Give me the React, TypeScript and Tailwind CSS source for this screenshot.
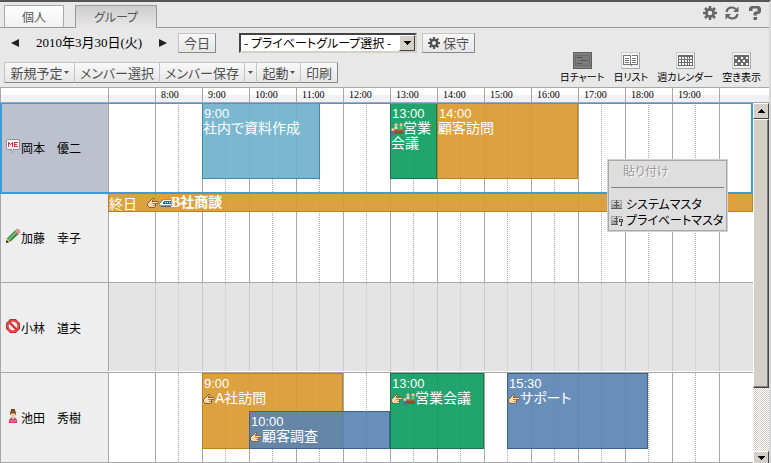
import { useState } from 'react';
import type { ReactNode } from 'react';

type Tone = 'cyan' | 'green' | 'orange' | 'blue';
type EventIcon = 'hand' | 'meeting';

interface ScheduleEvent {
  start: number;
  end: number;
  time: string;
  title: string;
  tone: Tone;
  icons?: EventIcon[];
  lower?: boolean;
}

interface Member {
  id: string;
  name: string;
  icon: ReactNode;
  selected?: boolean;
  off?: boolean;
  allDay?: boolean;
  events: ScheduleEvent[];
}

const HOUR_WIDTH = 47;
const FIRST_HOUR = 7;
const HOURS = [8, 9, 10, 11, 12, 13, 14, 15, 16, 17, 18, 19];

const toneClass: Record<Tone, string> = {
  cyan: 'bg-[#6db0ca]/90 border-[#3b8db0]',
  green: 'bg-[#099a5e]/90 border-[#14794b]',
  orange: 'bg-[#d9982a]/90 border-[#bf8020]',
  blue: 'bg-[#5883b2]/90 border-[#3c6290]',
};

/* ---------- icons ---------- */

function MeIcon() {
  return (
    <svg width="14" height="14" viewBox="0 0 14 14" shapeRendering="crispEdges">
      <path d="M1 0h12v1h1v9h-1v1H8v1H7v2H6v-2H5v-1H1v-1H0V1h1z" fill="#8a9494" />
      <path d="M1 1h12v9H7v2H6v-2H1z" fill="#f4f4f4" />
      <path d="M2 3h1v1h1v1h1V4h1V3h1v5H6V5H5v1H4V5H3v3H2zM8 3h4v1H9v1h2v1H9v1h3v1H8z" fill="#d8303c" />
    </svg>
  );
}

function PencilIcon() {
  return (
    <svg width="14" height="14" viewBox="0 0 14 14">
      <path d="M0 14l1-4.500 8-8L12.500 5l-8 7.500z" fill="#2c7a35" />
      <path d="M2 10l7.500-7.500L11 4l-7.500 7.500z" fill="#6cc46c" />
      <path d="M9 2l1.800-1.800h1.700L14 1.800v1.500L12.300 5z" fill="#e49a94" stroke="#a8705e" strokeWidth=".6" />
      <path d="M8.500 2.300l3.200 3.200" stroke="#8b98a0" strokeWidth="1" />
      <path d="M0 14l1-4.500L4.500 12.700z" fill="#e8cc94" />
      <path d="M0 14l.6-3 2.400 2.300z" fill="#3a2210" />
    </svg>
  );
}

function ForbiddenIcon() {
  return (
    <svg width="14" height="14" viewBox="0 0 14 14">
      <path d="M4.200 0h5.600L14 4.200v5.600L9.800 14H4.200L0 9.800V4.200z" fill="#b52a2a" />
      <circle cx="7" cy="7" r="5.300" fill="#f6eeee" stroke="#e05050" strokeWidth="2" />
      <path d="M3.200 3.200l7.600 7.600" stroke="#cf3d3d" strokeWidth="2.400" />
    </svg>
  );
}

function PersonIcon() {
  return (
    <svg width="14" height="14" viewBox="0 0 14 14">
      <path d="M5 0h4v2H5z" fill="#70401e" />
      <circle cx="7" cy="4" r="3" fill="#8a5028" />
      <path d="M5 4.500h4v2.200L8 8.500H6L5 6.700z" fill="#f2cda2" />
      <path d="M3 14v-3l2-2.500h4l2 2.500v3z" fill="#d83a70" />
      <path d="M5.500 8.500h3L7 10.500z" fill="#fbe6d8" />
      <path d="M4 12h6" stroke="#f08aac" />
    </svg>
  );
}

function HandIcon() {
  return (
    <svg width="12" height="12" viewBox="0 0 12 12" shapeRendering="crispEdges" className="inline-block shrink-0 align-[-2px]">
      <path d="M5 1h2v2H6v1h5v1h1v1h-1v1H9v3H8v1H2v-1H1V9H0V6h1V5h1V4h1V3h1V2h1z" fill="#8f5f34" />
      <path d="M5 2h1v1H5v2h6v1H8v4H2V9H1V6h1V5h1V4h1V3h1z" fill="#fbd9ae" />
      <path d="M5 6h3v1H5zM6 8h2v1H6z" fill="#b98350" />
    </svg>
  );
}

function TrainIcon() {
  return (
    <svg width="12" height="12" viewBox="0 0 12 12" shapeRendering="crispEdges" className="inline-block shrink-0 align-[-2px]">
      <path d="M3 2h9v8H1V9H0V6h1V4h1V3h1z" fill="#7f98b4" />
      <path d="M4 3h8v5H1V6h1V5h1V4h1z" fill="#f2f6fa" />
      <path d="M5 4h7v3H4V5h1z" fill="#2760c0" />
      <path d="M6 5h1v1H6zM8 5h1v1H8zM10 5h1v1h-1z" fill="#fff" />
      <path d="M2 9h10v1H2z" fill="#5c6268" />
    </svg>
  );
}

function MeetingIcon() {
  return (
    <svg width="12" height="12" viewBox="0 0 12 12" className="inline-block shrink-0 align-[-2px]">
      <circle cx="5" cy="1.800" r="1.600" fill="#efc79a" />
      <circle cx="10" cy="1.800" r="1.600" fill="#efc79a" />
      <path d="M3.500 3.500h3V6h-3z" fill="#e4e0dc" />
      <path d="M8.500 3.500h3V6h-3z" fill="#7fbf6a" />
      <path d="M2.500 6H12v5H4z" fill="#8d5130" />
      <path d="M2.500 6H12v1.500H3z" fill="#b9744a" />
      <circle cx="1.800" cy="6.500" r="1.500" fill="#efc79a" />
      <path d="M0 8.200h3.500V12H0z" fill="#566fa8" />
    </svg>
  );
}

function GearIcon({ size }: { size: number }) {
  return (
    <svg width={size} height={size} viewBox="0 0 14 14" fill="none" stroke="currentColor">
      <circle cx="7" cy="7" r="3.600" strokeWidth="2.600" />
      <path d="M7 0v3M7 11v3M0 7h3M11 7h3M2 2l2 2M10 10l2 2M12 2l-2 2M4 10l-2 2" strokeWidth="2.600" />
    </svg>
  );
}

function RefreshIcon() {
  return (
    <svg width="14" height="14" viewBox="0 0 14 14" fill="none" stroke="currentColor" strokeWidth="2.200">
      <path d="M1.500 6C2 3 4.500 1.500 7 1.500c1.500 0 2.800.6 3.800 1.700M12.500 8c-.5 3-3 4.500-5.500 4.500-1.500 0-2.800-.6-3.800-1.700" />
      <path d="M13.500.5V6H8zM.5 13.500V8H6z" fill="currentColor" stroke="none" />
    </svg>
  );
}

function HelpIcon() {
  return (
    <svg width="12" height="14" viewBox="0 0 12 14" fill="currentColor">
      <path d="M0 5V2l2-2h8l2 2v4l-2 2H8v1.500H4.500V7L6 5.500h2.500v-3h-5V5zM4.500 11H8v3H4.500z" />
    </svg>
  );
}

function Caret() {
  return (
    <svg width="5" height="3" viewBox="0 0 5 3" className="shrink-0">
      <path d="M0 0h5L2.500 3z" fill="#555" />
    </svg>
  );
}

function ChartGlyph() {
  return (
    <svg width="17" height="15" viewBox="0 0 17 15" shapeRendering="crispEdges">
      <path d="M1 2h15v11H1z" fill="#6a6a6a" />
      <path d="M2 3h13v9H2z" fill="#7c7c7c" />
      <path d="M3 4h6v1H3zM6 7h8v1H6zM3 10h5v1H3z" fill="#555" />
    </svg>
  );
}

function ListGlyph() {
  return (
    <svg width="17" height="15" viewBox="0 0 17 15" shapeRendering="crispEdges">
      <path d="M1 2h7l1 1 1-1h6v10h-6l-1 1-1-1H1z" fill="#777" />
      <path d="M2 3h6v8H2zM9 3h6v8H9z" fill="#fff" />
      <path d="M3 5h4v1H3zM3 7h4v1H3zM3 9h4v1H3zM10 5h4v1h-4zM10 7h4v1h-4zM10 9h4v1h-4zM8 3h1v9H8z" fill="#777" />
    </svg>
  );
}

function WeekGlyph() {
  return (
    <svg width="17" height="15" viewBox="0 0 17 15" shapeRendering="crispEdges">
      <path d="M1 2h15v11H1z" fill="#6c6c6c" />
      <path
        d="M2 4h2v2H2zM5 4h2v2H5zM8 4h2v2H8zM11 4h1v2h-1zM13 4h2v2h-2zM2 7h2v2H2zM5 7h2v2H5zM8 7h2v2H8zM11 7h1v2h-1zM13 7h2v2h-2zM2 10h2v2H2zM5 10h2v2H5zM8 10h2v2H8zM11 10h1v2h-1zM13 10h2v2h-2z"
        fill="#fff"
      />
    </svg>
  );
}

function FreeGlyph() {
  return (
    <svg width="17" height="15" viewBox="0 0 17 15" shapeRendering="crispEdges">
      <path d="M1 2h15v11H1z" fill="#6c6c6c" />
      <path d="M2 4h2v2H2zM8 4h2v2H8zM13 4h2v2h-2zM5 7h2v2H5zM10 7h2v2h-2zM2 10h2v2H2zM8 10h2v2H8zM13 10h2v2h-2z" fill="#fff" />
    </svg>
  );
}

function MasterIcon({ locked = false }: { locked?: boolean }) {
  return (
    <svg width="12" height="11" viewBox="0 0 12 11" shapeRendering="crispEdges">
      <path d="M0 1h11v8H0z" fill="#a4a4a4" />
      <path d="M1 2h9v3H1z" fill="#d2d2d2" />
      <path d="M0 9h11v1H0zM5 1h1v8H5zM3 3h5v1H3zM3 6h5v1H3z" fill="#5c5c5c" />
      {locked && (
        <>
          <path d="M7 3h5v8H7z" fill="#dedede" />
          <path d="M8 4h4v3h-1v4H9v-1h1V7H8zM9 5v1h2V5z" fill="#444" fillRule="evenodd" />
        </>
      )}
    </svg>
  );
}

/* ---------- data ---------- */

const members: Member[] = [
  {
    id: 'okamoto',
    name: '岡本　優二',
    icon: <MeIcon />,
    selected: true,
    events: [
      { start: 9, end: 11.5, time: '9:00', title: '社内で資料作成', tone: 'cyan' },
      { start: 13, end: 14, time: '13:00', title: '営業会議', tone: 'green', icons: ['meeting'] },
      { start: 14, end: 17, time: '14:00', title: '顧客訪問', tone: 'orange' },
    ],
  },
  { id: 'kato', name: '加藤　幸子', icon: <PencilIcon />, allDay: true, events: [] },
  { id: 'kobayashi', name: '小林　道夫', icon: <ForbiddenIcon />, off: true, events: [] },
  {
    id: 'ikeda',
    name: '池田　秀樹',
    icon: <PersonIcon />,
    events: [
      { start: 9, end: 12, time: '9:00', title: 'A社訪問', tone: 'orange', icons: ['hand'] },
      { start: 10, end: 13, time: '10:00', title: '顧客調査', tone: 'blue', icons: ['hand'], lower: true },
      { start: 13, end: 15, time: '13:00', title: '営業会議', tone: 'green', icons: ['hand', 'meeting'] },
      { start: 15.5, end: 18.5, time: '15:30', title: 'サポート', tone: 'blue', icons: ['hand'] },
    ],
  },
];

const views = [
  { label: '日チャート', glyph: <ChartGlyph /> },
  { label: '日リスト', glyph: <ListGlyph /> },
  { label: '週カレンダー', glyph: <WeekGlyph /> },
  { label: '空き表示', glyph: <FreeGlyph /> },
];

/* ---------- pieces ---------- */

function EventBlock({ event }: { event: ScheduleEvent }) {
  return (
    <div
      className={`absolute overflow-hidden border pt-0.5 font-['Liberation_Sans','Noto_Sans_CJK_JP',sans-serif] text-[14px] leading-[15px] text-white ${
        toneClass[event.tone]
      } ${event.lower ? 'top-[38px] h-[38px]' : 'top-0 h-[76px]'}`}
      style={{
        left: Math.floor((event.start - FIRST_HOUR) * HOUR_WIDTH),
        width: Math.ceil((event.end - event.start) * HOUR_WIDTH),
      }}
    >
      <div className="pl-px text-[13px] leading-[15px]">{event.time}</div>
      <div className="break-all">
        {event.icons?.map((icon) => (icon === 'hand' ? <HandIcon key={icon} /> : <MeetingIcon key={icon} />))}
        {event.title}
      </div>
    </div>
  );
}

function MemberRow({ member }: { member: Member }) {
  const line = member.off ? 'border-[#cbcbcb]' : 'border-[#a8a8a8]';

  return (
    <div className="relative flex h-[90px] border-b border-[#a8a8a8]">
      <div
        className={`flex w-[108px] shrink-0 items-center border-l border-[#a8a8a8] pl-[5px] text-[12px] text-black ${
          member.selected ? 'bg-[#bdc1ce]' : 'bg-[#eeeeee]'
        }`}
      >
        <span className="pb-1">{member.icon}</span>
        <span className="pl-px">{member.name}</span>
      </div>

      <div className={`relative flex min-w-0 flex-1 ${member.off ? 'border-b border-white bg-[#e4e4e4]' : 'bg-white'}`}>
        <div className="w-[47px] shrink-0 border-l border-[#a8a8a8]" />
        {HOURS.map((hour) => (
          <div key={hour} className={`w-[47px] shrink-0 border-l pl-[22px] ${line}`}>
            <div className={`h-full border-l border-dotted ${line}`} />
          </div>
        ))}
        <div className={`flex-1 border-l ${line}`} />

        {member.allDay && (
          <div className="absolute inset-x-0 top-0 flex h-[19px] items-center border border-[#bf8020] bg-[#d9982a]/90 text-[14px] leading-[18px] text-white">
            <span>終日</span>
            <span className="flex items-center pl-[10px] font-bold">
              <HandIcon />
              <TrainIcon />
              <span className="font-['Liberation_Serif','Noto_Sans_CJK_JP',serif]">B社商談</span>
            </span>
          </div>
        )}
        {member.events.map((event) => (
          <EventBlock key={event.time} event={event} />
        ))}
      </div>

      {member.selected && (
        <div className="pointer-events-none absolute inset-x-0 top-0 -bottom-0.5 z-10 border-2 border-t border-[#3f9bd3]" />
      )}
    </div>
  );
}

function TimeHeader() {
  return (
    <div className="flex h-4 border-y border-l border-[#a8a8a8] bg-linear-to-b from-white from-50% to-[#f0f0f6] to-50% font-['Liberation_Serif',serif] text-[10px] leading-[14px] text-black">
      <div className="w-[107px] shrink-0" />
      <div className="w-[47px] shrink-0 border-l border-[#a8a8a8]" />
      {HOURS.map((hour) => (
        <div key={hour} className="w-[47px] shrink-0 border-l border-[#a8a8a8] pl-[5px]">
          {hour}:00
        </div>
      ))}
      <div className="flex-1 border-l border-[#a8a8a8]" />
    </div>
  );
}

function Scrollbar() {
  const face = 'border border-t-white border-l-white border-r-[#444] border-b-[#444] bg-[#d4d0c8]';

  return (
    <div className="flex w-4 shrink-0 flex-col bg-[repeating-conic-gradient(#fff_0_25%,#d4d0c8_0_50%)] bg-size-[2px_2px]">
      <button aria-label="上へスクロール" className={`flex h-4 items-center justify-center ${face}`}>
        <svg width="7" height="4" viewBox="0 0 7 4" shapeRendering="crispEdges">
          <path d="M3 0h1v1h1v1h1v1h1v1H0V3h1V2h1V1h1z" />
        </svg>
      </button>
      <div className={`h-[269px] shadow-[inset_-1px_-1px_0_#808080] ${face}`} />
      <div className="flex-1" />
      <button aria-label="下へスクロール" className={`flex h-3 items-center justify-center border-b-0 ${face}`}>
        <svg width="7" height="4" viewBox="0 0 7 4" shapeRendering="crispEdges">
          <path d="M0 0h7v1H6v1H5v1H4v1H3V3H2V2H1V1H0z" />
        </svg>
      </button>
    </div>
  );
}

function PasteMenu() {
  return (
    <div
      role="menu"
      className="absolute top-14 left-[607px] z-20 w-[121px] border border-[#d0d0d0] bg-[#dedede] p-[3px] text-[12px] leading-4 text-black shadow-[inset_0_0_0_1px_#a8a8a8]"
    >
      <button role="menuitem" disabled className="block pl-[12px] text-[#999] [text-shadow:1px_1px_0_#fff]">
        貼り付け
      </button>
      <hr className="my-2 border-t border-[#888078]" />
      <button role="menuitem" className="flex w-full items-center gap-[3px] whitespace-nowrap">
        <MasterIcon />
        システムマスタ
      </button>
      <button role="menuitem" className="flex w-full items-center gap-[3px] whitespace-nowrap">
        <MasterIcon locked />
        プライベートマスタ
      </button>
    </div>
  );
}

const raised = 'bg-linear-to-b from-[#f8f8f8] to-[#e6e6e6] border border-t-[#c4c4c4] border-l-[#c4c4c4] border-r-[#888] border-b-[#888] text-[#505050]';

export default function App() {
  const [group, setGroup] = useState('none');

  return (
    <div className="border-t-2 border-r-2 border-t-[#555] border-r-[#d8d8d8] bg-[#e8e8e8] font-['Noto_Sans_CJK_JP',sans-serif] text-[13px] leading-4 text-black [font-feature-settings:'palt']">
      {/* tabs */}
      <div className="flex h-[26px] items-end border-b border-[#999] pr-[8px]">
        <button className="ml-1 h-[22px] w-[60px] border border-b-0 border-[#aaa] bg-linear-to-b from-white to-[#f0f0f0] text-[12px] text-[#555]">
          個人
        </button>
        <button className="-mb-px ml-[11px] h-[23px] w-[82px] border border-b-0 border-[#999] bg-linear-to-b from-[#cdcdcd] to-[#e8e8e8] text-[12px] text-[#555]">
          グループ
        </button>
        <div className="ml-auto flex h-full items-center gap-2 pb-1 text-[#666]">
          <button aria-label="設定"><GearIcon size={14} /></button>
          <button aria-label="更新"><RefreshIcon /></button>
          <button aria-label="ヘルプ" className="pl-0.5"><HelpIcon /></button>
        </div>
      </div>

      {/* toolbar */}
      <div className="flex h-[59px] items-end justify-between pr-[8px]">
        <div className="pb-1">
          <div className="flex items-center pl-[11px]">
            <button aria-label="前日">
              <svg width="8" height="8" viewBox="0 0 8 8"><path d="M8 0v8L0 4z" fill="#222" /></svg>
            </button>
            <span className="w-[140px] text-center font-['Liberation_Serif','Noto_Sans_CJK_JP',serif] text-[13px] whitespace-nowrap">
              2010年3月30日(火)
            </span>
            <button aria-label="翌日">
              <svg width="8" height="8" viewBox="0 0 8 8"><path d="M0 0v8l8-4z" fill="#222" /></svg>
            </button>
            <button className={`ml-[11px] h-5 w-[38px] leading-4 ${raised}`}>今日</button>
            <div className="relative ml-[23px]">
              <select
                aria-label="グループ"
                value={group}
                onChange={(e) => setGroup(e.target.value)}
                className="block h-5 w-[178px] appearance-none border-2 border-t-[#444] border-r-[#d4d0c8] border-b-[#d4d0c8] border-l-[#444] bg-white pr-4 pl-[3px] text-[12px] leading-4"
              >
                <option value="none">- プライベートグループ選択 -</option>
              </select>
              <span className="pointer-events-none absolute inset-y-0.5 right-0.5 flex w-4 items-center justify-center border border-t-white border-r-[#444] border-b-[#444] border-l-white bg-[#d4d0c8]">
                <svg width="7" height="4" viewBox="0 0 7 4" shapeRendering="crispEdges">
                  <path d="M0 0h7v1H6v1H5v1H4v1H3V3H2V2H1V1H0z" />
                </svg>
              </span>
            </div>
            <button className={`ml-[5px] flex h-5 w-[53px] items-center justify-center gap-[3px] leading-4 ${raised}`}>
              <GearIcon size={12} />
              保守
            </button>
          </div>

          <div className="mt-[9px] ml-1 flex">
            <button className={`flex h-[21px] w-[71px] items-center justify-center gap-px ${raised}`}>
              新規予定
              <Caret />
            </button>
            <button className={`-ml-px h-[21px] w-[86px] ${raised}`}>メンバー選択</button>
            <button className={`-ml-px h-[21px] w-[86px] ${raised}`}>メンバー保存</button>
            <button aria-label="保存メニュー" className={`-ml-px flex h-[21px] w-[13px] items-center justify-center ${raised}`}>
              <Caret />
            </button>
            <button className={`-ml-px flex h-[21px] w-[45px] items-center justify-center gap-px ${raised}`}>
              起動
              <Caret />
            </button>
            <button className={`-ml-px h-[21px] w-[38px] ${raised}`}>印刷</button>
          </div>
        </div>

        <div className="flex gap-[9px] pb-[2px]">
          {views.map((view, i) => (
            <button key={view.label} className="flex flex-col items-center text-[10px] leading-4 whitespace-nowrap">
              <span
                className={`border ${
                  i === 0 ? 'border-[#606060] bg-[#808080]' : 'border-t-[#ccc] border-r-[#aaa] border-b-[#aaa] border-l-[#ccc] bg-[#f2f2f2]'
                }`}
              >
                {view.glyph}
              </span>
              {view.label}
            </button>
          ))}
        </div>
      </div>

      <TimeHeader />

      {/* day chart */}
      <div className="relative flex">
        <div className="min-w-0 flex-1">
          {members.map((member) => (
            <MemberRow key={member.id} member={member} />
          ))}
        </div>
        <Scrollbar />
        <PasteMenu />
      </div>
    </div>
  );
}
